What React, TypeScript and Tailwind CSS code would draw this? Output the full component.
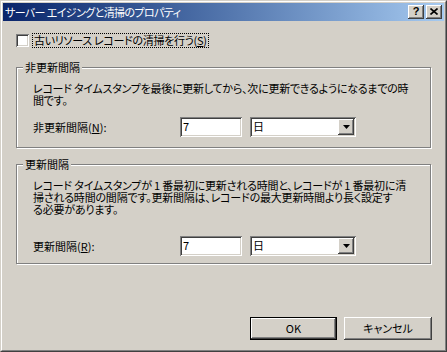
import type { ReactNode } from "react";

const raised =
  "bg-[#d4d0c8] shadow-[inset_-1px_-1px_#404040,inset_1px_1px_#ffffff,inset_-2px_-2px_#808080]";
const sunken =
  "bg-white shadow-[inset_1px_1px_#808080,inset_-1px_-1px_#ffffff,inset_2px_2px_#404040,inset_-2px_-2px_#d4d0c8]";

function GroupBox({ title, className, children }: { title: string; className: string; children: ReactNode }) {
  return (
    <div className={`relative mx-[13px] border border-[#808080] shadow-[inset_1px_1px_0_#ffffff,1px_1px_0_#ffffff] ${className}`}>
      <span className="absolute left-[6px] top-[-7px] bg-[#d4d0c8] px-[2px] leading-[12px]">{title}</span>
      {children}
    </div>
  );
}

function Interval({ label, hotkey }: { label: string; hotkey: string }) {
  return (
    <div className="flex items-center">
      <span className="w-[147px] leading-[12px]">
        {label}(<span className="underline">{hotkey}</span>):
      </span>
      <div className={`h-[20px] w-[62px] pl-[3px] pt-[3px] leading-[13px] ${sunken}`}>7</div>
      <div className={`ml-[8px] flex h-[20px] w-[106px] p-[2px] ${sunken}`}>
        <span className="flex-1 pl-[1px] pt-[1px] leading-[13px]">日</span>
        <div className={`flex h-[16px] w-[16px] items-center justify-center ${raised}`}>
          <svg width="7" height="4" viewBox="0 0 7 4">
            <path d="M0 0h7L3.5 4z" fill="#000" />
          </svg>
        </div>
      </div>
    </div>
  );
}

export default function App() {
  return (
    <div className="h-[352px] w-[447px] border border-t-[#d4d0c8] border-l-[#d4d0c8] border-r-[#404040] border-b-[#404040] bg-[#d4d0c8] font-['Noto_Sans_CJK_JP',sans-serif] text-[11px] text-black [font-feature-settings:'palt']">
      <div className="flex h-full flex-col border border-t-white border-l-white border-r-[#808080] border-b-[#808080] p-[1px]">
        {/* title bar */}
        <div className="flex h-[18px] items-center bg-linear-to-r from-[#0a246a] to-[#a6caf0] pl-[2px] pr-[2px]">
          <span className="flex-1 leading-[14px] tracking-[-0.6px] text-white">サーバー エイジングと清掃のプロパティ</span>
          <div className={`flex h-[14px] w-[16px] items-center justify-center pb-[1px] font-['Liberation_Sans',sans-serif] text-[11px] font-bold leading-none ${raised}`}>
            ?
          </div>
          <div className={`ml-[2px] flex h-[14px] w-[16px] items-center justify-center pb-[1px] ${raised}`}>
            <svg width="8" height="7" viewBox="0 0 8 7">
              <path d="M0.5 0.5L7.5 6.5M7.5 0.5L0.5 6.5" stroke="#000" strokeWidth="1.6" />
            </svg>
          </div>
        </div>

        {/* client */}
        <div className="flex flex-1 flex-col">
          <div className="ml-[13px] mt-[12px] flex h-[15px] items-center">
            <div className={`h-[13px] w-[13px] ${sunken}`} />
            <span className="ml-[3px] border border-dotted border-black px-[1px] leading-[13px] tracking-[-0.3px]">
              古いリソース レコードの清掃を行う(<span className="underline">S</span>)
            </span>
          </div>

          <GroupBox title="非更新間隔" className="mt-[19px] h-[81px] pl-[16px] pt-[14px]">
            <p className="whitespace-nowrap leading-[12px] tracking-[-0.25px]">
              レコード タイムスタンプを最後に更新してから、次に更新できるようになるまでの時
              <br />
              間です。
            </p>
            <div className="mt-[11px]">
              <Interval label="非更新間隔" hotkey="N" />
            </div>
          </GroupBox>

          <GroupBox title="更新間隔" className="mt-[16px] h-[100px] pl-[16px] pt-[14px]">
            <p className="whitespace-nowrap leading-[12px] tracking-[-0.2px]">
              レコード タイムスタンプが 1 番最初に更新される時間と、レコードが 1 番最初に清
              <br />
              掃される時間の間隔です。更新間隔は、レコードの最大更新時間より長く設定す
              <br />
              る必要があります。
            </p>
            <div className="mt-[21px]">
              <Interval label="更新間隔" hotkey="R" />
            </div>
          </GroupBox>

          <div className="mr-[12px] mt-[53px] flex justify-end gap-[7px]">
            <div className="h-[23px] w-[87px] border border-black">
              <div className={`flex h-full items-center justify-center pb-[1px] ${raised}`}>OK</div>
            </div>
            <div className={`flex h-[23px] w-[88px] items-center justify-center pb-[1px] ${raised}`}>キャンセル</div>
          </div>
        </div>
      </div>
    </div>
  );
}
